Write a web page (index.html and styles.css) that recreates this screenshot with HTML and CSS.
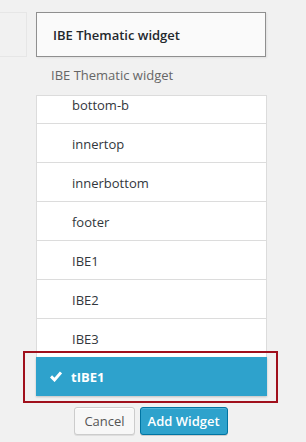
FILE: index.html
```html
<!DOCTYPE html>
<html>
<head>
<meta charset="utf-8">
<link rel="stylesheet" href="styles.css">
</head>
<body>
<div class="stage">
  <div class="top">
    <div class="ghost"></div>
    <div class="widget-head">IBE Thematic widget</div>
  </div>
  <div class="panel">
    <div class="subtitle">IBE Thematic widget</div>
    <div class="list">
      <div class="list-inner">
        <div class="row">bottom-b</div>
        <div class="row">innertop</div>
        <div class="row">innerbottom</div>
        <div class="row">footer</div>
        <div class="row">IBE1</div>
        <div class="row">IBE2</div>
        <div class="row">IBE3</div>
      </div>
      <div class="row selected">
        <svg class="check" width="12" height="11" viewBox="0 0 12 11"><path d="M1 5.4 L4.5 8.9 L11 1.4" fill="none" stroke="#fff" stroke-width="3" stroke-linecap="butt" stroke-linejoin="miter"/></svg>
        tIBE1
      </div>
    </div>
    <div class="actions">
      <button class="btn">Cancel</button>
      <button class="btn primary">Add Widget</button>
    </div>
  </div>
  <div class="highlight"></div>
</div>
</body>
</html>
```

FILE: styles.css
```css
* { box-sizing: border-box; }
html, body {
  margin: 0;
  padding: 0;
  background: #f1f1f1;
  font-family: "Open Sans", "Noto Sans", sans-serif;
  font-size: 13px;
  color: #444;
}
.stage {
  position: relative;
  padding-top: 12px;
  width: 306px;
  height: 442px;
  overflow: hidden;
}
.top {
  display: flex;
  gap: 9px;
}
.ghost {
  width: 27px;
  height: 45px;
  border: 1px solid #e6e6e6;
  border-left: none;
  background: #f1f1f1;
}
.widget-head {
  width: 230px;
  height: 45px;
  border: 1px solid #8f8f8f;
  background: #fafafa;
  padding: 13px 0 0 16px;
  line-height: 18px;
  font-weight: 600;
  color: #23282d;
  box-shadow: 1px 1px 2px rgba(0,0,0,0.07);
}
.panel {
  margin-left: 36px;
  width: 230px;
}
.subtitle {
  margin-top: 9px;
  padding-left: 15px;
  line-height: 18px;
  color: #666;
}
.list {
  margin-top: 11px;
  border: 1px solid #dcdcdc;
  border-bottom: none;
  background: #fff;
  margin-right: -1px;
}
.list-inner {
  overflow: hidden;
  height: 261px;
}
.list-inner .row:first-child {
  margin-top: -11px;
}
.row {
  height: 39px;
  padding: 2px 0 0 35px;
  line-height: 36px;
  border-bottom: 1px solid #dcdcdc;
  color: #32373c;
  white-space: nowrap;
}
.row.selected {
  position: relative;
  margin: 0 -1px;
  padding-left: 14px;
  background: #2ea2cc;
  color: #fff;
  font-weight: 700;
  border-bottom: none;
  display: flex;
  align-items: center;
  gap: 9px;
  padding-top: 1px;
  box-shadow: 0 1px 2px rgba(0,0,0,0.2);
}
.check {
  display: block;
  margin-top: -2px;
}
.actions {
  display: flex;
  justify-content: center;
  gap: 5px;
  margin-top: 11px;
}
.btn {
  font-family: "Open Sans", "Noto Sans", sans-serif;
  font-size: 13px;
  height: 28px;
  line-height: 26px;
  padding: 0 9px;
  border-radius: 3px;
  border: 1px solid #cccccc;
  background: #f7f7f7;
  color: #555;
  box-shadow: inset 0 1px 0 #fff, 0 1px 0 rgba(0,0,0,0.08);
  margin: 0;
}
.btn.primary {
  background: #2ea2cc;
  border-color: #0074a2;
  color: #fff;
  font-weight: 600;
  padding: 0 7px;
  box-shadow: inset 0 1px 0 rgba(120,200,230,0.5), 0 1px 0 rgba(0,0,0,0.15);
}
.highlight {
  position: absolute;
  left: 23px;
  top: 351px;
  width: 255px;
  height: 52px;
  border: 2px solid #a0101c;
  pointer-events: none;
}
```
